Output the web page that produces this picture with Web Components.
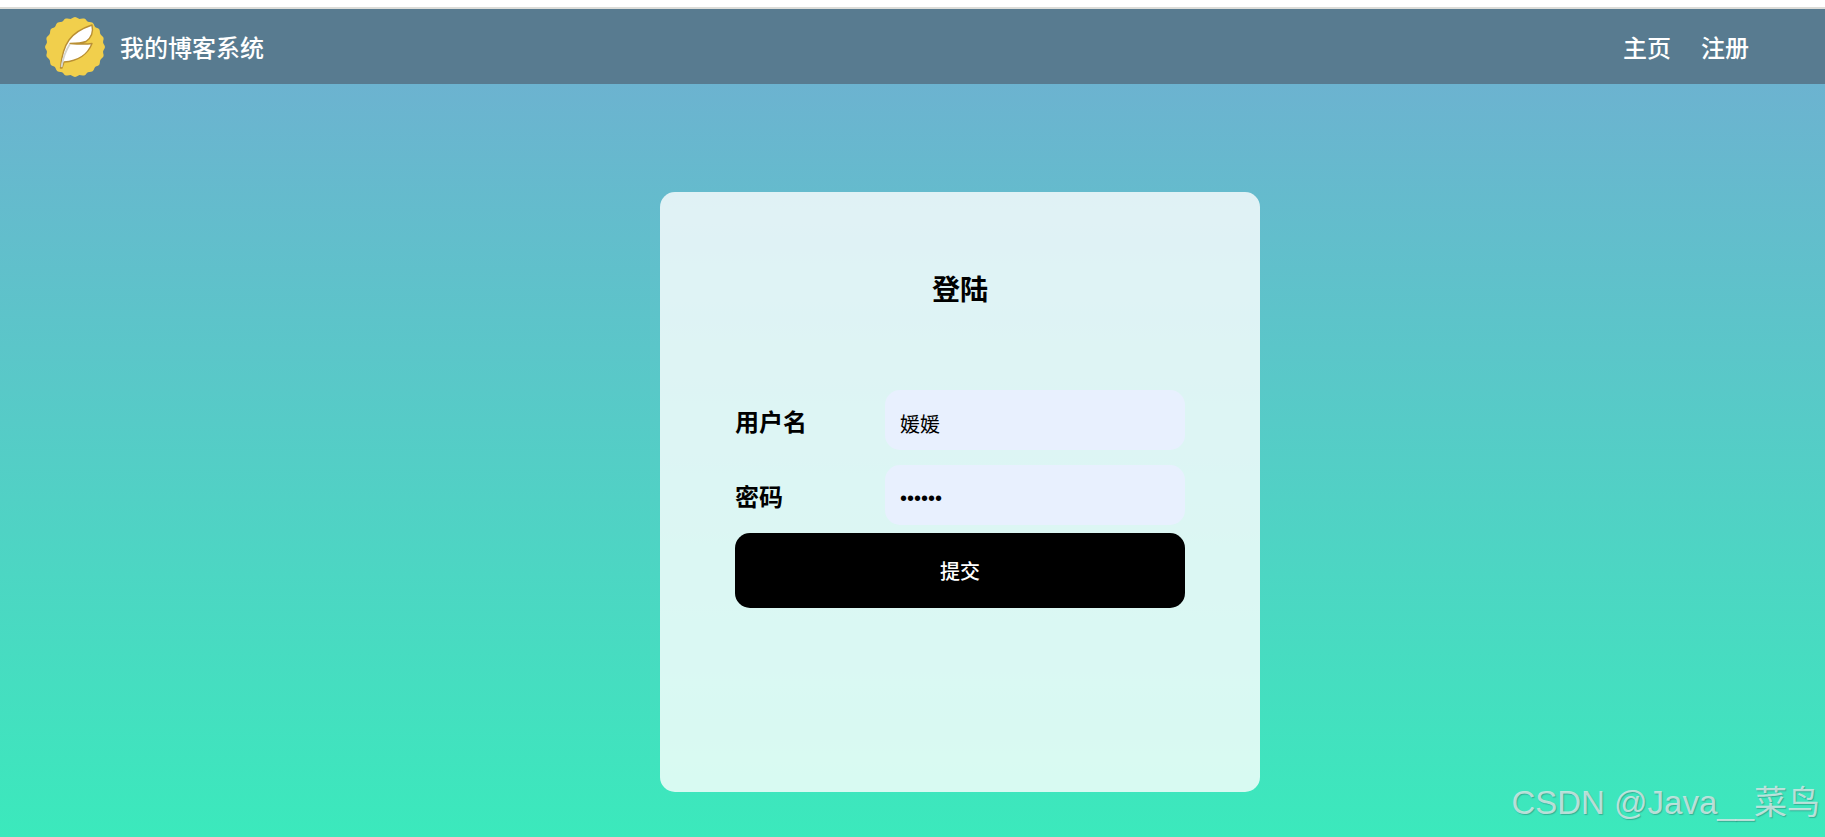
<!DOCTYPE html>
<html lang="zh">
<head>
<meta charset="utf-8">
<title>登陆</title>
<style>
  html, body { margin: 0; height: 100%; }
  body {
    font-family: "Noto Sans CJK SC", "Liberation Sans", sans-serif;
    overflow: hidden;
  }
</style>
</head>
<body>
<login-page>
  <blog-nav slot="nav" title-text="我的博客系统">
    <a href="#">主页</a>
    <a href="#">注册</a>
  </blog-nav>
  <login-card slot="main" heading="登陆">
    <form-row label="用户名" value="媛媛"></form-row>
    <form-row label="密码" type="password" value="123456"></form-row>
    <submit-button>提交</submit-button>
  </login-card>
</login-page>

<script>
const pageTemplate = document.createElement("template");
pageTemplate.innerHTML = `
<style>
  :host {
    display: flex;
    flex-direction: column;
    position: relative;
    height: 837px;
    background: #fff;
  }
  .strip {
    height: 7px;
    flex: none;
    border-bottom: 2px solid #dcdcd8;
  }
  .content {
    flex: 1;
    display: flex;
    flex-direction: column;
    background: linear-gradient(#6cb3d0, #3be9bc);
  }
  .watermark {
    position: absolute;
    right: 5px;
    bottom: 13px;
    font: 33px "Liberation Sans", "Noto Sans CJK SC", sans-serif;
    color: rgba(222, 232, 232, 0.8);
    text-shadow: 1px 1px 1px rgba(40, 110, 100, 0.45);
  }
</style>
<div class="strip"></div>
<slot name="nav"></slot>
<div class="content">
  <slot name="main"></slot>
</div>
<div class="watermark">CSDN @Java__菜鸟</div>
`;

class LoginPage extends HTMLElement {
  constructor() {
    super();
    this.attachShadow({ mode: "open" }).append(pageTemplate.content.cloneNode(true));
  }
}

const navTemplate = document.createElement("template");
navTemplate.innerHTML = `
<style>
  :host {
    display: flex;
    align-items: center;
    height: 75px;
    flex: none;
    padding: 0 76px 0 45px;
    background: #587b90;
    color: #fff;
  }
  svg { display: block; flex: none; }
  .title {
    margin-left: 15px;
    font-size: 24px;
    line-height: 32px;
    font-weight: 500;
  }
  .links {
    margin-left: auto;
    display: flex;
    gap: 30px;
    font-size: 24px;
    font-weight: 500;
  }
  ::slotted(a) {
    color: #fff;
    text-decoration: none;
  }
</style>
<svg width="60" height="60" viewBox="0 0 60 60">
  <path id="badge" fill="#f1cf4c"></path>
  <path d="M15.500 51C16.500 40 19 30 24 23C29 16 38 11 47 8C48.500 15 46 21 41 24.500C36 26.500 30 26.500 25 26.500C32 27 40 27.500 47 26.500C43 37 33 44 19 45L17 51Z"
    fill="#fff" stroke="#b98f34" stroke-width="1.400" stroke-linejoin="round"></path>
  <path d="M16.500 50C18 41 21 33 25 27" fill="none" stroke="#d4d4ce" stroke-width="1.800"></path>
</svg>
<div class="title"></div>
<nav class="links"><slot></slot></nav>
`;

class BlogNav extends HTMLElement {
  constructor() {
    super();
    this.attachShadow({ mode: "open" }).append(navTemplate.content.cloneNode(true));
  }

  connectedCallback() {
    this.shadowRoot.querySelector(".title").textContent = this.getAttribute("title-text");
    // scalloped edge of the round logo
    let d = "";
    const points = 120;
    for (let i = 0; i < points; i++) {
      const angle = (i / points) * Math.PI * 2;
      const r = 29.2 + 0.8 * Math.cos(angle * 20);
      d += (i ? "L" : "M") + (30 + r * Math.sin(angle)).toFixed(2) + " " + (30 - r * Math.cos(angle)).toFixed(2);
    }
    this.shadowRoot.querySelector("#badge").setAttribute("d", d + "Z");
  }
}

const cardTemplate = document.createElement("template");
cardTemplate.innerHTML = `
<style>
  :host {
    display: block;
    box-sizing: border-box;
    width: 600px;
    height: 600px;
    margin: 108px 0 0 660px;
    padding: 60px 75px 0;
    border-radius: 15px;
    background: rgba(255, 255, 255, 0.8);
    color: #000;
  }
  h3 {
    margin: 0 0 55.500px;
    height: 75px;
    line-height: 73px;
    text-align: center;
    font-size: 28px;
    font-weight: 700;
  }
</style>
<h3></h3>
<slot></slot>
`;

class LoginCard extends HTMLElement {
  constructor() {
    super();
    this.attachShadow({ mode: "open" }).append(cardTemplate.content.cloneNode(true));
  }

  connectedCallback() {
    this.shadowRoot.querySelector("h3").textContent = this.getAttribute("heading");
  }
}

const rowTemplate = document.createElement("template");
rowTemplate.innerHTML = `
<style>
  :host {
    display: flex;
    align-items: center;
    height: 75px;
  }
  span {
    width: 150px;
    flex: none;
    font-size: 24px;
    font-weight: 700;
  }
  input {
    box-sizing: border-box;
    width: 300px;
    height: 60px;
    padding: 7px 15px 0;
    border: 0;
    outline: 0;
    border-radius: 15px;
    background: #e8f0fe;
    color: #000;
    font: 20px "Liberation Sans", "Noto Sans CJK SC", sans-serif;
  }
</style>
<span></span>
<input>
`;

class FormRow extends HTMLElement {
  constructor() {
    super();
    this.attachShadow({ mode: "open" }).append(rowTemplate.content.cloneNode(true));
  }

  connectedCallback() {
    this.shadowRoot.querySelector("span").textContent = this.getAttribute("label");
    const input = this.shadowRoot.querySelector("input");
    input.type = this.getAttribute("type") || "text";
    input.value = this.getAttribute("value");
    input.setAttribute("value", this.getAttribute("value"));
  }
}

const buttonTemplate = document.createElement("template");
buttonTemplate.innerHTML = `
<style>
  :host {
    display: block;
  }
  button {
    display: block;
    width: 100%;
    height: 75px;
    border: 0;
    border-radius: 15px;
    background: #000;
    color: #fff;
    font: 500 20px "Noto Sans CJK SC", "Liberation Sans", sans-serif;
  }
</style>
<button type="button"><slot></slot></button>
`;

class SubmitButton extends HTMLElement {
  constructor() {
    super();
    this.attachShadow({ mode: "open" }).append(buttonTemplate.content.cloneNode(true));
  }
}

customElements.define("login-page", LoginPage);
customElements.define("blog-nav", BlogNav);
customElements.define("login-card", LoginCard);
customElements.define("form-row", FormRow);
customElements.define("submit-button", SubmitButton);
</script>
</body>
</html>
